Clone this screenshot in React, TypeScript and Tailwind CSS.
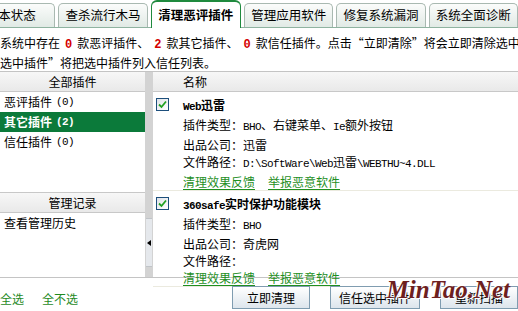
import React from 'react';

const L: React.FC<{ children: React.ReactNode; b?: boolean }> = ({ children, b }) => (
  <span className={`font-['Liberation_Mono',monospace] text-[11px] tracking-[-0.6px] ${b ? 'font-bold' : ''}`}>
    {children}
  </span>
);

const Red: React.FC<{ children: React.ReactNode }> = ({ children }) => (
  <span className="font-['Liberation_Mono',monospace] text-[12px] font-bold text-[#d40000] px-[5px]">{children}</span>
);

const Tab: React.FC<{ label: string; active?: boolean; first?: boolean }> = ({ label, active, first }) =>
  active ? (
    <div className="h-[28px] w-[94px] -mb-px rounded-t-[6px] border-t-2 border-x border-[#1f8a3e] bg-white flex items-center justify-center font-bold text-[12.5px]">
      {label}
    </div>
  ) : (
    <div
      className={`h-[24px] w-[93px] rounded-t-[5px] border border-b-0 border-[#a9b9b1] bg-linear-to-b from-[#fbfcfb] to-[#e1eae5] flex items-center justify-center text-[12.5px] ${first ? 'ml-[-34px]' : ''}`}
    >
      {label}
    </div>
  );

const Check: React.FC = () => (
  <div className="w-[13px] h-[13px] border border-[#1d4f7c] bg-linear-to-br from-[#dfe3e8] to-white flex items-center justify-center">
    <svg width="9" height="9" viewBox="0 0 9 9">
      <path d="M1 4.5 L3.5 7 L8 1.5" stroke="#21a121" strokeWidth="1.8" fill="none" />
    </svg>
  </div>
);

type Plugin = { title: React.ReactNode; type: React.ReactNode; company: string; path: React.ReactNode };

const plugins: Plugin[] = [
  {
    title: <><L b>Web</L>迅雷</>,
    type: <><L>BHO</L>、右键菜单、<L>Ie</L>额外按钮</>,
    company: '迅雷',
    path: <><L>D:\SoftWare\Web</L>迅雷<L>\WEBTHU~4.DLL</L></>,
  },
  {
    title: <><L b>360safe</L>实时保护功能模块</>,
    type: <L>BHO</L>,
    company: '奇虎网',
    path: null,
  },
];

const App: React.FC = () => {
  return (
    <div className="relative w-[518px] h-[311px] overflow-hidden bg-white text-[12px] text-black font-['Noto_Sans_CJK_SC',sans-serif]">
      {/* tabs */}
      <div className="flex items-end gap-[3px] h-[28px] border-b border-[#8fb3a0] whitespace-nowrap">
        <Tab label="基本状态" first />
        <Tab label="查杀流行木马" />
        <Tab label="清理恶评插件" active />
        <Tab label="管理应用软件" />
        <Tab label="修复系统漏洞" />
        <Tab label="系统全面诊断" />
      </div>

      {/* summary */}
      <div className="h-[43px] pt-[6px] leading-[17px] whitespace-nowrap overflow-hidden">
        <div>
          系统中存在<Red>0</Red>款恶评插件、<Red>2</Red>款其它插件、<Red>0</Red>款信任插件。点击“立即清除”将会立即清除选中插件，点击“信任
        </div>
        <div>选中插件”将把选中插件列入信任列表。</div>
      </div>

      {/* panels */}
      <div className="flex h-[207px] border-y border-[#c4c4c4]">
        <div className="w-[145px] flex flex-col">
          <div className="h-[20px] shrink-0 border-b border-[#c8c8c8] bg-linear-to-b from-[#f7f7f7] to-[#e9e9e9] flex items-center justify-center">
            全部插件
          </div>
          <div className="h-[20px] pl-[4px] flex items-center gap-[4px]">恶评插件<L>(0)</L></div>
          <div className="h-[20px] pl-[4px] flex items-center gap-[4px] bg-[#0b7a3a] text-white font-bold">其它插件<L b>(2)</L></div>
          <div className="h-[20px] pl-[4px] flex items-center gap-[4px]">信任插件<L>(0)</L></div>
          <div className="h-[40px]" />
          <div className="h-[21px] shrink-0 border-y border-[#c8c8c8] bg-linear-to-b from-[#f7f7f7] to-[#e9e9e9] flex items-center justify-center">
            管理记录
          </div>
          <div className="h-[20px] pl-[4px] flex items-center">查看管理历史</div>
        </div>

        {/* splitter */}
        <div className="w-[8px] bg-[#d3d3d3] flex flex-col">
          <div className="h-[146px]" />
          <div className="h-[49px] mx-[1px] bg-[#e5e8ec] border-y border-[#c0c4c8] flex items-center justify-center">
            <div className="w-0 h-0 border-y-[3px] border-y-transparent border-r-[4px] border-r-black" />
          </div>
        </div>

        <div className="flex-1 flex flex-col">
          <div className="h-[20px] shrink-0 border-b border-[#c8c8c8] bg-linear-to-b from-[#f7f7f7] to-[#e9e9e9] flex items-center pl-[30px]">
            名称
          </div>
          {plugins.map((p, i) => (
            <div key={i} className="flex pt-[4px] border-b border-[#ebeadf] leading-[17px]">
              <div className="w-[30px] pl-[3px] pt-[2px] shrink-0">
                <Check />
              </div>
              <div className="flex flex-col">
                <div className="font-bold">{p.title}</div>
                <div>插件类型：{p.type}</div>
                <div>出品公司：{p.company}</div>
                <div>文件路径：{p.path}</div>
                <div className="flex gap-[13px] text-[#1f8f1f] underline underline-offset-2">
                  <span>清理效果反馈</span>
                  <span>举报恶意软件</span>
                </div>
              </div>
            </div>
          ))}
        </div>
      </div>

      {/* bottom */}
      <div className="flex items-start pt-[8px] h-[33px]">
        <div className="w-[233px] flex gap-[18px] pt-[4px] text-[#1f8a1f]">
          <span>全选</span>
          <span>全不选</span>
        </div>
        <div className="flex gap-[20px]">
          <button className="w-[78px] h-[23px] border border-[#7f9cb0] bg-linear-to-b from-white to-[#dde5ec] text-[12px]">立即清理</button>
          <button className="w-[90px] h-[23px] border border-[#7f9cb0] bg-linear-to-b from-white to-[#dde5ec] text-[12px]">信任选中插件</button>
          <button className="w-[78px] h-[23px] border border-[#7f9cb0] bg-linear-to-b from-white to-[#dde5ec] text-[12px]">重新扫描</button>
        </div>
      </div>

      {/* watermark */}
      <div className="absolute right-[8px] bottom-[3px] font-['Liberation_Serif',serif] italic font-bold text-[25px] text-[#6e1f1f] [text-shadow:1px_1px_0_#fff,-1px_-1px_0_#fff]">
        MinTao.Net
      </div>
    </div>
  );
};

export default App;
